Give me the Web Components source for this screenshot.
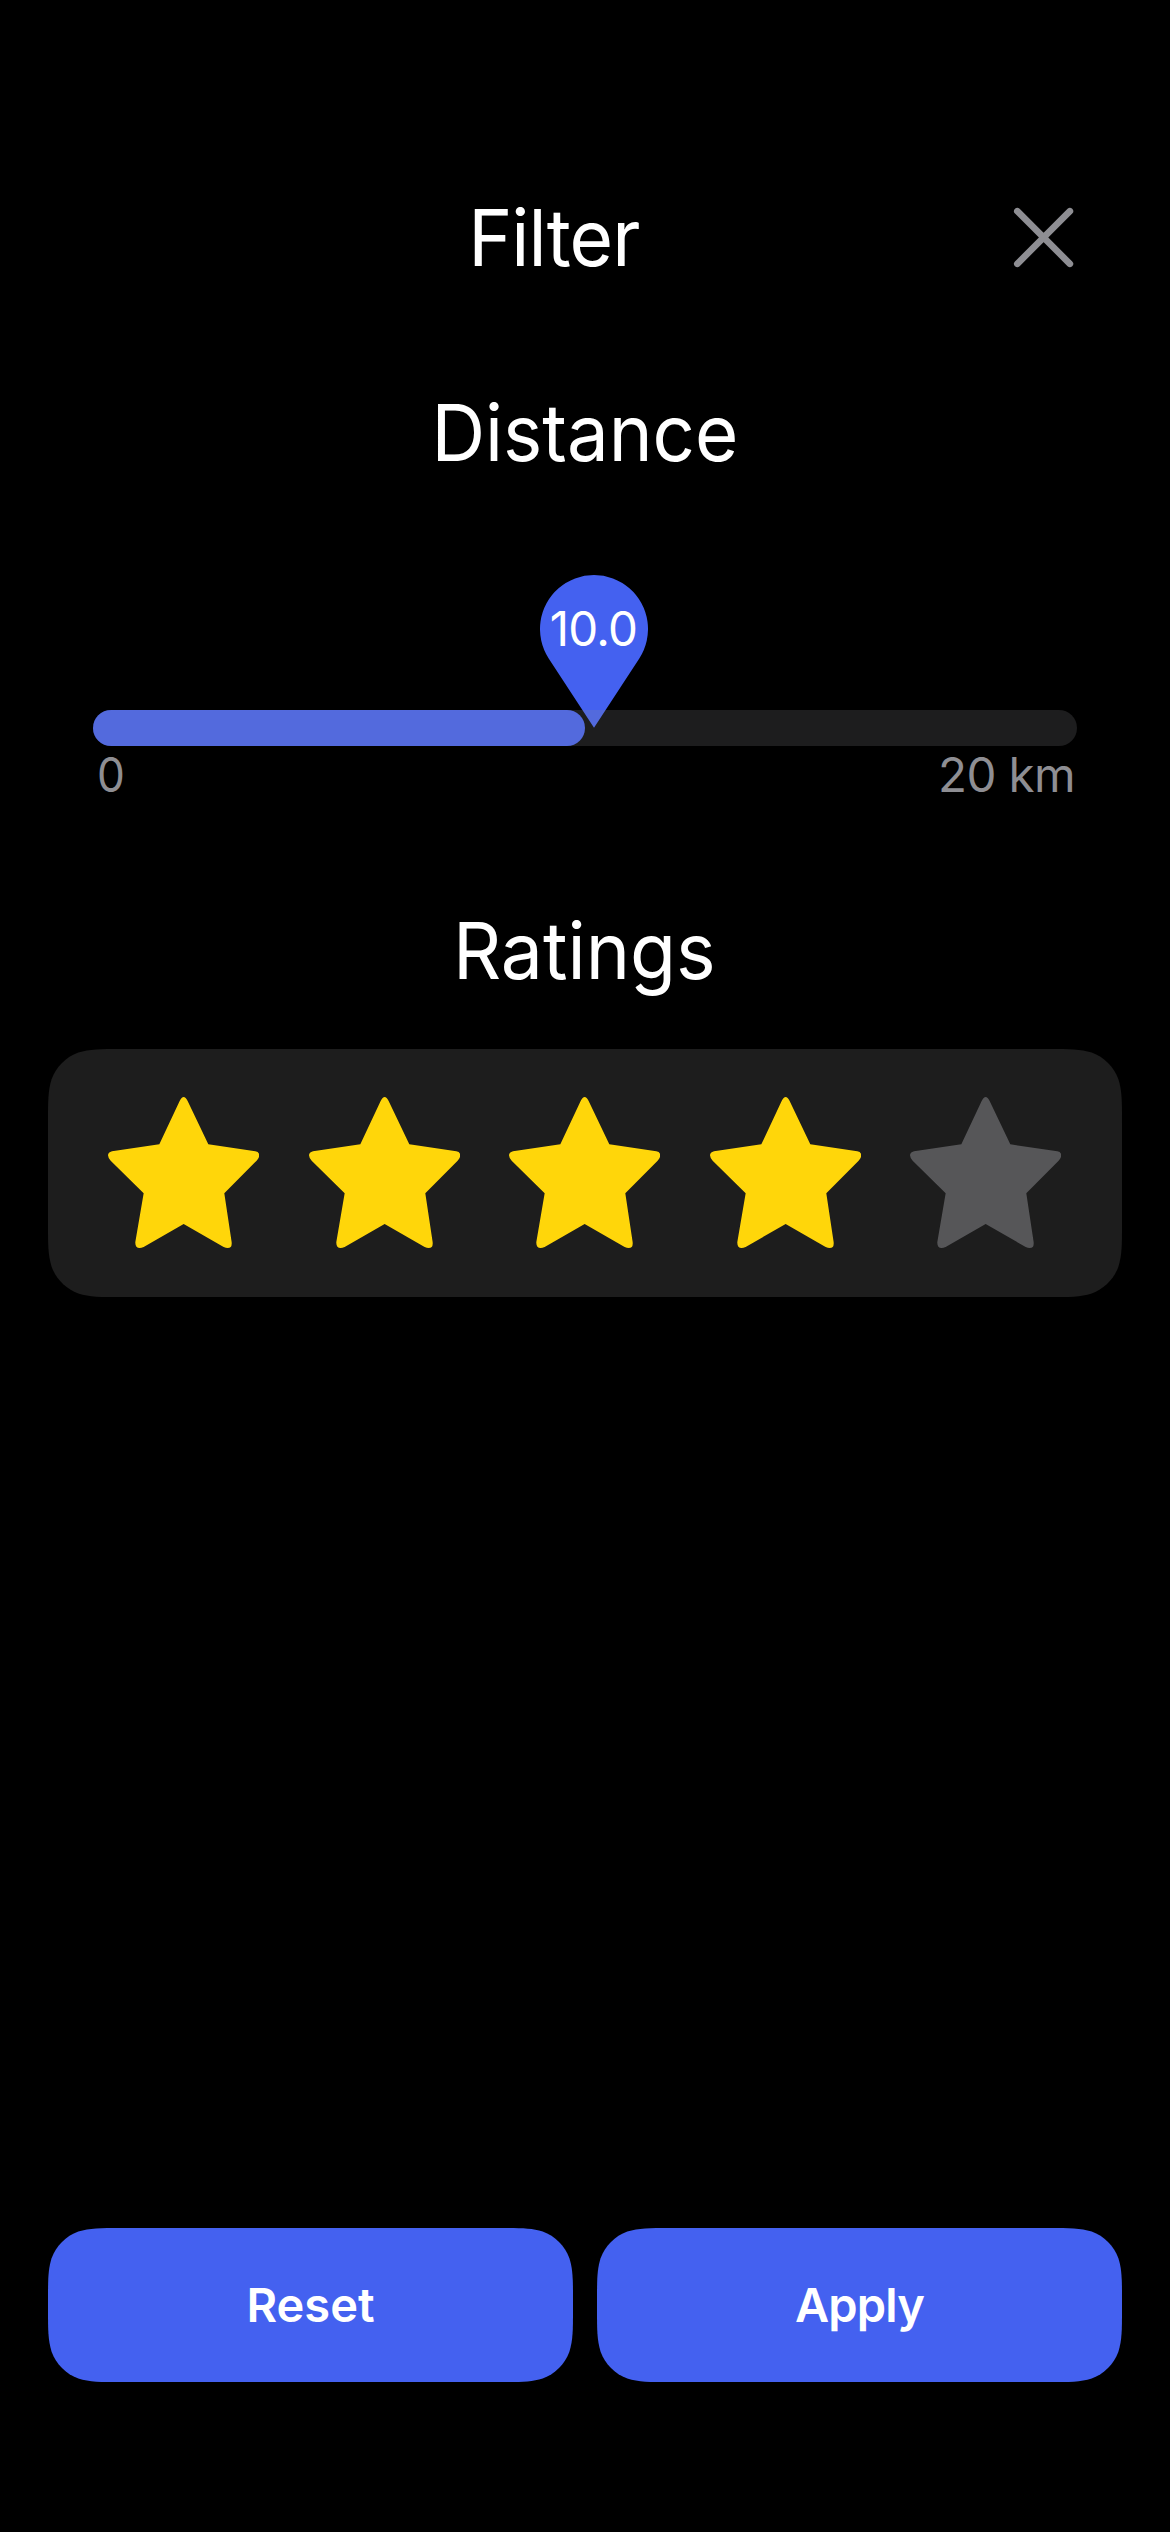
<!DOCTYPE html>
<html lang="en">
<head>
<meta charset="utf-8">
<title>Filter</title>
<style>
  html, body { margin: 0; background: #000; }
  body { color: #fff; font-family: Inter, "Liberation Sans", sans-serif; }
</style>
</head>
<body>
<filter-screen></filter-screen>

<script>
// Outline of a rectangle with continuous (smoothly blended) corners.
function continuousRect(w, h, r) {
  const corner = [[1.528665, 0], [1.088493, 0], [0.868407, 0], [0.631494, 0.074911],
    [0.372824, 0.169059], [0.169059, 0.372824], [0.074911, 0.631494], [0, 0.868407], [0, 1.088493], [0, 1.528665]];
  const map = (right, bottom, list) => list.map(([x, y]) =>
    (right ? w - x * r : x * r).toFixed(2) + ' ' + (bottom ? h - y * r : y * r).toFixed(2));
  const seg = p => `L${p[0]}C${p[1]} ${p[2]} ${p[3]}C${p[4]} ${p[5]} ${p[6]}C${p[7]} ${p[8]} ${p[9]}`;
  const back = [...corner].reverse();
  return 'M' + seg(map(true, false, corner)).slice(1) + seg(map(true, true, back)) +
    seg(map(false, true, corner)) + seg(map(false, false, back)) + 'Z';
}

class BaseElement extends HTMLElement {
  connectedCallback() {
    if (this.shadowRoot) return;
    this.attachShadow({ mode: 'open' }).innerHTML = this.render();
    const radius = this.constructor.radius;
    if (radius) {
      new ResizeObserver(() => {
        this.style.clipPath = `path("${continuousRect(this.offsetWidth, this.offsetHeight, radius)}")`;
      }).observe(this);
    }
  }
}

customElements.define('section-title', class extends BaseElement {
  render() {
    return `<style>
      :host { display: block; font-size: 78.4px; line-height: 93px; text-align: center; white-space: nowrap; }
      span { display: inline-block; transform: scaleX(var(--stretch, 1)); }
    </style><span><slot></slot></span>`;
  }
});

customElements.define('close-button', class extends BaseElement {
  render() {
    return `<style>
      :host { display: flex; width: 67px; height: 67px; }
      svg { width: 67px; height: 67px; }
    </style>
    <svg viewBox="0 0 67 67" fill="none" stroke="#8e8e93" stroke-width="6.6" stroke-linecap="round">
      <path d="M7.3 7.2 59.9 59.8M59.9 7.2 7.3 59.8"/>
    </svg>`;
  }
});

customElements.define('value-pin', class extends BaseElement {
  render() {
    return `<style>
      :host { display: block; width: 108px; height: 153px; }
      svg { display: block; }
      span { position: absolute; left: -1px; right: 0; top: 25px; text-align: center;
        font-size: 47.5px; line-height: 57px; letter-spacing: -0.7px; }
    </style>
    <svg width="108" height="153" viewBox="0 0 108 153">
      <path fill="#4461f0" d="M54 152.8 8.7 83.4A54 54 0 1 1 99.3 83.4Z"/>
    </svg>
    <span><slot></slot></span>`;
  }
});

customElements.define('distance-slider', class extends BaseElement {
  render() {
    return `<style>
      :host { display: block; }
      .track { position: relative; height: 36px; border-radius: 18px; }
      .track::after { content: ""; position: absolute; inset: 0; border-radius: 18px;
        background: rgba(142, 142, 147, .205); }
      .fill { width: 50%; height: 100%; border-radius: 18px; background: #4461f0; }
      value-pin { position: absolute; left: 447px; top: -135px; }
      .labels { display: flex; justify-content: space-between; padding: 0 2px 0 4px; color: #8e8e93;
        font-size: 47.5px; line-height: 57px; letter-spacing: -0.6px; }
      .min { transform: scaleX(.93); transform-origin: left; }
    </style>
    <div class="track"><div class="fill"></div><value-pin>10.0</value-pin></div>
    <div class="labels"><span class="min">0</span><span>20 km</span></div>`;
  }
});

customElements.define('rating-star', class extends BaseElement {
  render() {
    return `<style>
      :host { display: block; color: #565658; }
      :host([filled]) { color: #ffd60a; }
      svg { display: block; }
    </style>
    <svg width="151.3" height="151" viewBox="204 171 454 453">
      <path fill="currentColor" d="M358 313 419 183Q425 171 431 171Q437 171 443 183L505 313 646 334Q658 336 658 346
        Q658 353 650 362L553 460 575 606Q577 624 563 624Q558 624 551 621L431 552 311 621Q304 624 299 624
        Q285 624 286 606L311 460 212 362Q204 353 204 346Q204 337 216 334Z"/>
    </svg>`;
  }
});

customElements.define('rating-card', class extends BaseElement {
  static radius = 48;
  render() {
    const value = Number(this.getAttribute('value'));
    const stars = [1, 2, 3, 4, 5].map(n => `<rating-star ${n <= value ? 'filled' : ''}></rating-star>`).join('');
    return `<style>
      :host { display: flex; justify-content: space-between; box-sizing: border-box; height: 248px;
        padding: 48px 60.5px 0 60px; background: #1d1d1d; }
    </style>${stars}`;
  }
});

customElements.define('action-button', class extends BaseElement {
  static radius = 48;
  render() {
    return `<style>
      :host { display: flex; flex: 1; box-sizing: border-box; height: 154px; padding-bottom: 2px;
        align-items: center; justify-content: center;
        background: #4461f0; font-size: 47px; font-weight: 600; line-height: 57px; }
    </style><slot></slot>`;
  }
});

customElements.define('filter-screen', class extends BaseElement {
  render() {
    return `<style>
      :host { display: flex; flex-direction: column; box-sizing: border-box; width: 1170px; height: 2532px;
        padding: 191px 48px 150px; background: #000; overflow: hidden; }
      header { display: flex; align-items: center; padding: 0 45px 0 50px; height: 93px; }
      header section-title { flex: 1; letter-spacing: -1px; --stretch: .954; }
      .distance { margin-top: 102px; --stretch: .948; }
      distance-slider { margin: 231px 45px 0; }
      .ratings { margin-top: 101px; padding-right: 1px; --stretch: .957; }
      rating-card { margin-top: 52px; }
      footer { display: flex; gap: 24px; margin-top: auto; }
      .apply { letter-spacing: -0.8px; }
    </style>
    <header><section-title>Filter</section-title><close-button></close-button></header>
    <section-title class="distance">Distance</section-title>
    <distance-slider></distance-slider>
    <section-title class="ratings">Ratings</section-title>
    <rating-card value="4"></rating-card>
    <footer><action-button>Reset</action-button><action-button class="apply">Apply</action-button></footer>`;
  }
});
</script>
</body>
</html>
